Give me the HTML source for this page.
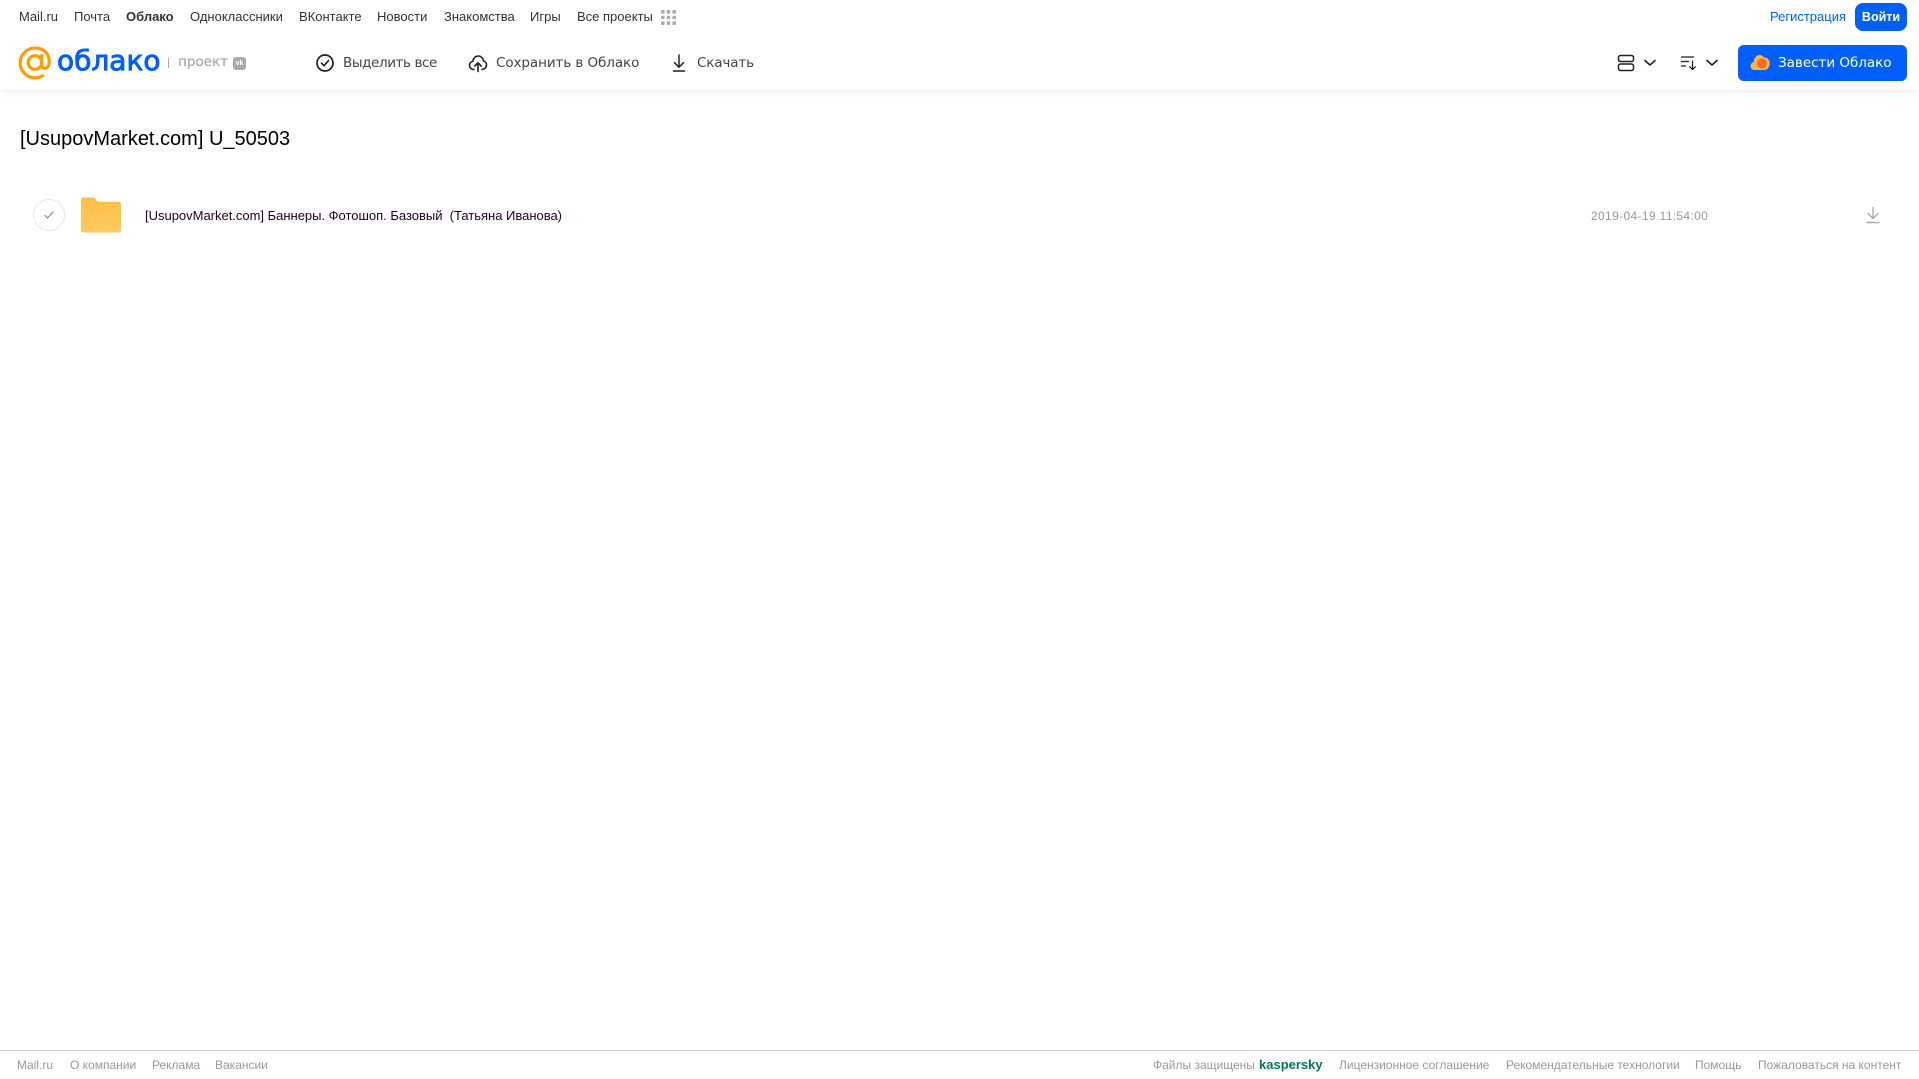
<!DOCTYPE html>
<html lang="ru">
<head>
<meta charset="utf-8">
<title>Облако</title>
<style>
html,body{margin:0;padding:0;background:#fff;}
body{position:relative;width:1919px;height:1079px;overflow:hidden;font-family:"Liberation Sans",Arial,sans-serif;}
.t{position:absolute;white-space:pre;line-height:20px;height:20px;}
.nav{top:7px;font-size:13px;color:#333;}
.tb{top:53px;font-family:"DejaVu Sans",sans-serif;font-size:13.5px;color:#444;}
.ft{top:1055px;font-size:12px;color:#999;}
.abs{position:absolute;}
#hdr{position:absolute;left:0;top:0;width:1919px;height:90px;background:#fff;box-shadow:0 2px 7px rgba(0,0,0,.07);}
#fl{position:absolute;left:0;top:1050px;width:1919px;height:1px;background:#d8d8d8;}
</style>
</head>
<body>
<div id="hdr"></div>

<div class="t nav" style="left:19px">Mail.ru</div>
<div class="t nav" style="left:74px">Почта</div>
<div class="t nav" style="left:126px;font-weight:bold">Облако</div>
<div class="t nav" style="left:190px">Одноклассники</div>
<div class="t nav" style="left:299px">ВКонтакте</div>
<div class="t nav" style="left:377px">Новости</div>
<div class="t nav" style="left:444px">Знакомства</div>
<div class="t nav" style="left:530px">Игры</div>
<div class="t nav" style="left:577px">Все проекты</div>
<svg class="abs" style="left:661px;top:10px" width="15" height="15" viewBox="0 0 15 15" fill="#aaa">
<rect x="0" y="0" width="3.600" height="3.600" rx="1"/><rect x="5.700" y="0" width="3.600" height="3.600" rx="1"/><rect x="11.400" y="0" width="3.600" height="3.600" rx="1"/>
<rect x="0" y="5.700" width="3.600" height="3.600" rx="1"/><rect x="5.700" y="5.700" width="3.600" height="3.600" rx="1"/><rect x="11.400" y="5.700" width="3.600" height="3.600" rx="1"/>
<rect x="0" y="11.400" width="3.600" height="3.600" rx="1"/><rect x="5.700" y="11.400" width="3.600" height="3.600" rx="1"/><rect x="11.400" y="11.400" width="3.600" height="3.600" rx="1"/>
</svg>

<div class="t nav" style="left:1770px;color:#005ff9">Регистрация</div>
<div class="abs" style="left:1855px;top:3px;width:52px;height:28px;background:#005ff9;border-radius:8px"></div>
<div class="t nav" style="left:1855px;width:52px;text-align:center;color:#fff;font-weight:bold;font-size:12.500px">Войти</div>

<!-- logo -->
<svg class="abs" style="left:18px;top:46px" width="34" height="34" viewBox="0 0 34 34" fill="none">
<circle cx="17" cy="16.500" r="6.800" stroke="#ff9e00" stroke-width="3.200"/>
<path d="M23.800 9.500v9.500c0 4.600 6.800 4.600 7.300-1.500C31.900 7 25.500 2 17 2 8.800 2 2.200 8.600 2.200 16.800s6.600 15 14.800 15c3 0 5.500-.7 7.500-2" stroke="#ff9e00" stroke-width="3.200" stroke-linecap="round"/>
</svg>
<div class="t" style="left:57px;top:45px;height:32px;line-height:32px;font-family:'DejaVu Sans',sans-serif;font-size:28px;color:#005ff9;-webkit-text-stroke:.9px #005ff9">облако</div>
<div class="abs" style="left:168px;top:58px;width:1px;height:10px;background:#aaa"></div>
<div class="t" style="left:178px;top:52px;font-family:'DejaVu Sans',sans-serif;font-size:13.500px;color:#aaa;-webkit-text-stroke:.25px #aaa">проект</div>
<div class="abs" style="left:233px;top:57px;width:13px;height:13px;border-radius:3px;background:#aaa;color:#fff;font-size:7px;font-weight:bold;line-height:13px;text-align:center">vk</div>

<!-- toolbar -->
<svg class="abs" style="left:315px;top:53px" width="20" height="20" viewBox="0 0 20 20" fill="none" stroke="#222" stroke-width="1.700">
<circle cx="10" cy="10" r="8"/><path d="M6.500 10.200l2.500 2.500 4.500-5" stroke-linecap="round" stroke-linejoin="round"/>
</svg>
<div class="t tb" style="left:343px;letter-spacing:-.4px">Выделить все</div>
<svg class="abs" style="left:468px;top:53px" width="20" height="20" viewBox="0 0 20 20" fill="none" stroke="#222" stroke-width="1.600" stroke-linecap="round" stroke-linejoin="round">
<path d="M6 16.500H5C2.800 16 1.500 14.300 1.500 12.300c0-2 1.400-3.600 3.300-4C5.300 5.200 7.500 3 10.200 3c2.800 0 5 2.200 5.300 5 1.800.4 3 2 3 3.900 0 2.200-1.500 4.100-4.500 4.600"/>
<path d="M10 18.500V10M6.800 13L10 9.800l3.200 3.200"/>
</svg>
<div class="t tb" style="left:496px;letter-spacing:-.08px">Сохранить в Облако</div>
<svg class="abs" style="left:670px;top:53px" width="18" height="20" viewBox="0 0 18 20" fill="none" stroke="#222" stroke-width="1.500" stroke-linecap="round" stroke-linejoin="round">
<path d="M9 2v12M4.500 9.700L9 14.200l4.500-4.500M3.500 18h11"/>
</svg>
<div class="t tb" style="left:697px;letter-spacing:-.15px">Скачать</div>

<svg class="abs" style="left:1617px;top:54px" width="18" height="18" viewBox="0 0 18 18" fill="none" stroke="#222" stroke-width="1.500">
<rect x="1.500" y="1.500" width="15" height="6" rx="2"/><rect x="1.500" y="10" width="15" height="6.500" rx="2"/>
</svg>
<svg class="abs" style="left:1643px;top:58px" width="14" height="10" viewBox="0 0 14 10" fill="none" stroke="#222" stroke-width="1.600" stroke-linecap="round" stroke-linejoin="round"><path d="M2 2.500l5 4.500 5-4.500"/></svg>
<svg class="abs" style="left:1680px;top:54px" width="18" height="18" viewBox="0 0 18 18" fill="none" stroke="#222" stroke-width="1.300" stroke-linecap="round" stroke-linejoin="round">
<path d="M1.500 3h12M1.500 7.500h7M1.500 12h4M12.500 7v8.500M9.700 12.800l2.800 2.800 2.800-2.800"/>
</svg>
<svg class="abs" style="left:1705px;top:58px" width="14" height="10" viewBox="0 0 14 10" fill="none" stroke="#222" stroke-width="1.600" stroke-linecap="round" stroke-linejoin="round"><path d="M2 2.500l5 4.500 5-4.500"/></svg>

<div class="abs" style="left:1738px;top:45px;width:169px;height:36px;background:#005ff9;border-radius:6px"></div>
<svg class="abs" style="left:1750px;top:54px" width="20" height="17" viewBox="0 0 20 17">
<path d="M4.500 16C2 16 .5 14.200.5 12c0-2 1.300-3.600 3.100-4C4 4 6.500 1 9.500 1c2.200 0 3.500 1 4.500 2.500 3-.3 5.700 2 5.700 6 0 3.800-2.500 6.500-5.700 6.500z" fill="#ffb347"/>
<circle cx="12" cy="9.500" r="5" fill="#f26b21"/>
</svg>
<div class="t" style="left:1778px;top:53px;font-family:'DejaVu Sans',sans-serif;font-size:13.500px;color:#fff;letter-spacing:-.02px">Завести Облако</div>

<!-- content -->
<div class="t" style="left:20px;top:127px;height:24px;line-height:24px;font-size:20px;color:#000">[UsupovMarket.com] U_50503</div>

<div class="abs" style="left:33px;top:199px;width:30px;height:30px;border:1px solid #e8e8e8;border-radius:50%"></div>
<svg class="abs" style="left:42px;top:209px" width="14" height="12" viewBox="0 0 14 12" fill="none" stroke="#999" stroke-width="1.300" stroke-linecap="round" stroke-linejoin="round"><path d="M3 6.500l2.500 2.500L11 3"/></svg>

<svg class="abs" style="left:80px;top:196px" width="42" height="37" viewBox="0 0 42 37">
<defs><linearGradient id="f" x1="0" y1="0" x2="0" y2="1"><stop offset="0" stop-color="#ffbe45"/><stop offset="1" stop-color="#ffca60"/></linearGradient></defs>
<path d="M1 4c0-1.600 1-2.500 2.500-2.500h9c2 0 3 1 4 3 .4.800 1 1.200 2 1.200h20c1.700 0 2.500 1 2.500 2.500V34c0 1.500-.8 2.500-2.500 2.500h-35C2 36.500 1 35.500 1 34z" fill="url(#f)"/>
</svg>

<div class="t" style="left:145px;top:206px;font-size:13px;color:#220022;letter-spacing:-.01px">[UsupovMarket.com] Баннеры. Фотошоп. Базовый  (Татьяна Иванова)</div>
<div class="t" style="left:1591px;top:206px;font-size:12px;color:#999;letter-spacing:.35px">2019-04-19 11:54:00</div>
<svg class="abs" style="left:1865px;top:206px" width="16" height="18" viewBox="0 0 16 18" fill="none" stroke="#aaa" stroke-width="1.400" stroke-linecap="round" stroke-linejoin="round"><path d="M8 1.500v10.500M3 7.500l5 5 5-5M2 16.500h12"/></svg>

<!-- footer -->
<div id="fl"></div>
<div class="t ft" style="left:17px">Mail.ru</div>
<div class="t ft" style="left:70px">О компании</div>
<div class="t ft" style="left:152px">Реклама</div>
<div class="t ft" style="left:215px">Вакансии</div>
<div class="t ft" style="left:1153px">Файлы защищены</div>
<div class="t ft" style="left:1259px;color:#00795c;font-weight:bold;font-size:13px">kaspersky</div>
<div class="t ft" style="left:1339px">Лицензионное соглашение</div>
<div class="t ft" style="left:1506px">Рекомендательные технологии</div>
<div class="t ft" style="left:1695px">Помощь</div>
<div class="t ft" style="left:1758px">Пожаловаться на контент</div>
</body>
</html>
